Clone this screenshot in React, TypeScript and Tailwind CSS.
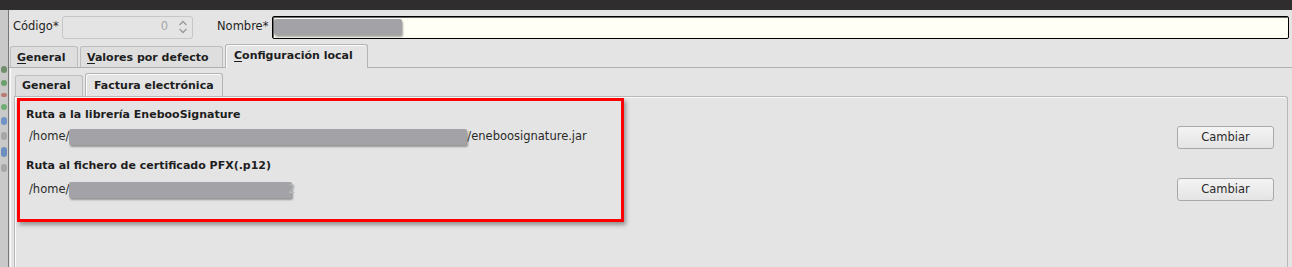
import React from 'react';

const font = { fontFamily: '"DejaVu Sans", Verdana, sans-serif' };

const Redacted: React.FC<{ width: number }> = ({ width }) => (
  <span
    className="inline-block h-[16px] rounded-[2px] bg-[#a3a2a6] shadow-[1px_2px_2px_rgba(0,0,0,0.35)]"
    style={{ width }}
  />
);

const Button: React.FC<{ label: string }> = ({ label }) => (
  <button className="w-[97px] h-[23px] rounded-[3px] border border-[#a9a9a9] bg-gradient-to-b from-[#f4f4f4] to-[#e4e4e4] text-[11.5px] text-[#2a2a2a] leading-none">
    {label}
  </button>
);

const OuterTab: React.FC<{ mnemonic: string; rest: string; width: number; active?: boolean }> = ({
  mnemonic,
  rest,
  width,
  active,
}) =>
  active ? (
    <div
      className="h-[24px] -mb-px rounded-t-[3px] border border-b-0 border-[#b4b4b4] bg-[#e4e4e4] pl-[8px] pt-[3px] text-[11px] font-bold text-[#1e1e1e] shadow-[inset_1px_1px_0_#fafafa]"
      style={{ width }}
    >
      <span className="underline underline-offset-2">{mnemonic}</span>
      {rest}
    </div>
  ) : (
    <div
      className="h-[21px] rounded-t-[3px] border border-b-0 border-[#bdbdbd] bg-[#dedede] pl-[6px] pt-[3px] text-[11px] font-bold text-[#1e1e1e]"
      style={{ width }}
    >
      <span className="underline underline-offset-2">{mnemonic}</span>
      {rest}
    </div>
  );

const InnerTab: React.FC<{ label: string; width: number; active?: boolean }> = ({ label, width, active }) =>
  active ? (
    <div
      className="h-[24px] -mb-px rounded-t-[3px] border border-b-0 border-[#b4b4b4] bg-[#e4e4e4] pl-[8px] pt-[4px] text-[11px] font-bold text-[#1e1e1e] shadow-[inset_1px_1px_0_#fafafa]"
      style={{ width }}
    >
      {label}
    </div>
  ) : (
    <div
      className="h-[21px] rounded-t-[3px] border border-b-0 border-[#bdbdbd] bg-[#dedede] pl-[6px] pt-[2px] text-[11px] font-bold text-[#1e1e1e]"
      style={{ width }}
    >
      {label}
    </div>
  );

const App: React.FC = () => {
  return (
    <div className="w-[1292px] h-[267px] overflow-hidden flex flex-col bg-[#e4e4e4]" style={font}>
      {/* window title strip */}
      <div className="h-[10px] shrink-0 bg-[#2f2d2e]" />

      <div className="flex flex-1 min-h-0">
        {/* background window peeking on the left */}
        <div className="w-[8px] shrink-0 bg-[#c9c9c9] flex flex-col gap-[7px] pt-[56px] pl-[1px] overflow-hidden">
          <div className="h-[7px] w-[6px] rounded-sm bg-[#6f8f6a]" />
          <div className="h-[6px] w-[6px] rounded-sm bg-[#6aa06c]" />
          <div className="h-[4px] w-[6px] rounded-sm bg-[#b87b72]" />
          <div className="h-[6px] w-[6px] rounded-sm bg-[#6fae72]" />
          <div className="h-[8px] w-[6px] rounded-sm bg-[#6f93c4]" />
          <div className="h-[8px] w-[6px] rounded-sm bg-[#a6a6a6]" />
          <div className="h-[10px] w-[6px] rounded-sm bg-[#6d8fc0]" />
          <div className="h-[8px] w-[6px] rounded-sm bg-[#a6a6a6]" />
        </div>
        <div className="w-px shrink-0 bg-[#777]" />

        <div className="flex-1 flex flex-col min-w-0 text-[#1e1e1e]">
          {/* header row */}
          <div className="h-[34px] shrink-0 flex items-center pl-[4px] pr-[3px] text-[11.5px]">
            <span className="w-[49px]">Código*</span>
            <div className="w-[131px] h-[23px] rounded-[3px] border border-[#c6c6c6] bg-[#e4e4e4] flex items-center justify-end pr-[3px]">
              <span className="text-[#a6a6a6] mr-[9px]">0</span>
              <svg width="12" height="16" viewBox="0 0 12 16" className="text-[#9a9a9a]">
                <path d="M2.5 6 L6 2.5 L9.5 6" fill="none" stroke="currentColor" strokeWidth="1.4" />
                <path d="M2.5 10 L6 13.5 L9.5 10" fill="none" stroke="currentColor" strokeWidth="1.4" />
              </svg>
            </div>
            <span className="ml-[24px] w-[55px]">Nombre*</span>
            <div className="flex-1 h-[23px] rounded-[2px] border-[1.5px] border-black bg-[#fffff6] shadow-[inset_1px_1px_0_#6a6a6a] flex items-center pl-[1px]">
              <Redacted width={128} />
            </div>
          </div>

          {/* outer tab bar */}
          <div className="h-[24px] shrink-0 flex items-end gap-[2px] pl-[1px] border-b border-[#b0b0b0]">
            <OuterTab mnemonic="G" rest="eneral" width={68} />
            <OuterTab mnemonic="V" rest="alores por defecto" width={143} />
            <OuterTab mnemonic="C" rest="onfiguración local" width={143} active />
          </div>

          {/* outer tab page */}
          <div className="flex-1 min-h-0 flex flex-col ml-[1px] border-l border-[#fafafa] pl-[3px] pr-[4px] pt-[4px]">
            <div className="h-[24px] shrink-0 flex items-end gap-[2px] pl-[1px]">
              <InnerTab label="General" width={68} />
              <InnerTab label="Factura electrónica" width={138} active />
            </div>

            <div className="flex-1 flex justify-between rounded-tr-[3px] border border-b-0 border-[#b8b8b8] shadow-[inset_1px_1px_0_#fafafa] pl-[2px] pr-[13px] pt-[1px]">
              {/* annotated block */}
              <div className="w-[607px] h-[124px] border-[3px] border-[#ff0000] shadow-[2px_3px_4px_rgba(0,0,0,0.35)] flex flex-col pl-[6px] pt-[7px]">
                <div className="h-[14px] leading-[14px] text-[11px] font-bold">Ruta a la librería EnebooSignature</div>
                <div className="mt-[7px] h-[16px] flex items-center pl-[3px] text-[11.5px] text-[#2a2a2a]">
                  <span>/home/</span>
                  <Redacted width={398} />
                  <span>/eneboosignature.jar</span>
                </div>
                <div className="mt-[14px] h-[14px] leading-[14px] text-[11px] font-bold">
                  Ruta al fichero de certificado PFX(.p12)
                </div>
                <div className="mt-[9px] h-[16px] flex items-center pl-[3px] text-[11.5px] text-[#2a2a2a]">
                  <span>/home/</span>
                  <Redacted width={223} />
                  <span className="-ml-[4px] text-[#b8b8b8]">2</span>
                </div>
              </div>

              <div className="flex flex-col gap-[29px] pt-[28px]">
                <Button label="Cambiar" />
                <Button label="Cambiar" />
              </div>
            </div>
          </div>
        </div>
      </div>
    </div>
  );
};

export default App;
